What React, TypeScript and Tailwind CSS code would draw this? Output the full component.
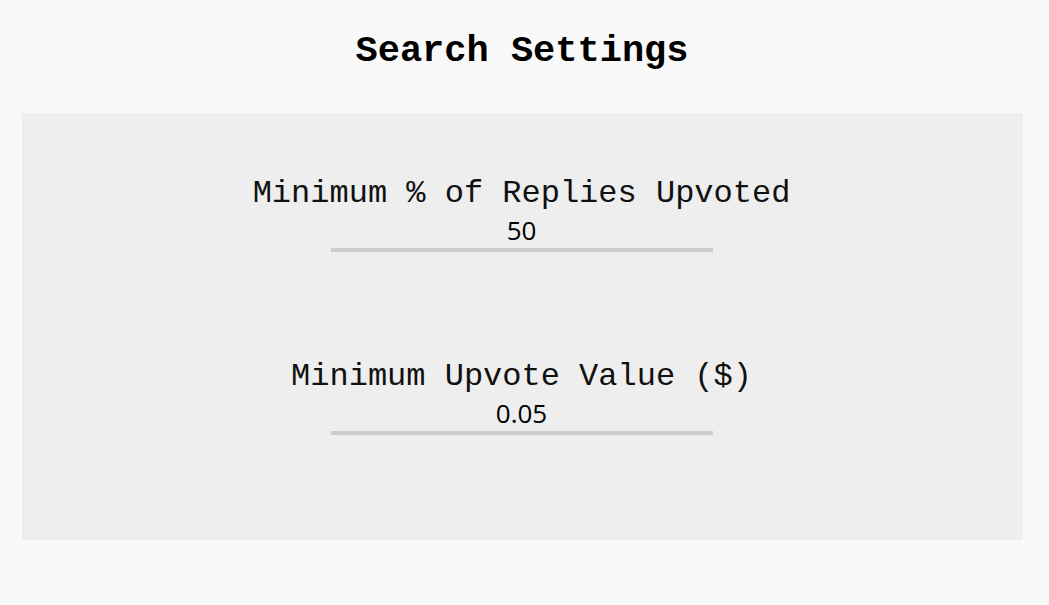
import React, { useState } from 'react';

const mono = { fontFamily: '"Liberation Mono", "Courier New", monospace' };

interface SettingFieldProps {
  label: string;
  value: string;
  onChange: (v: string) => void;
}

const SettingField: React.FC<SettingFieldProps> = ({ label, value, onChange }) => (
  <div className="flex flex-col items-center">
    <label className="text-[32px] leading-[36px] text-[#111]" style={mono}>
      {label}
    </label>
    <input
      type="text"
      value={value}
      onChange={(e) => onChange(e.target.value)}
      className="box-border h-[40px] w-[382px] border-0 border-b-4 border-[#cccccc] bg-transparent text-center text-[26px] font-medium text-black outline-none font-['Open_Sans',sans-serif]"
    />
  </div>
);

export default function App() {
  const [minPercent, setMinPercent] = useState('50');
  const [minValue, setMinValue] = useState('0.05');

  return (
    <div className="min-h-screen w-full bg-[#f9f9f9]">
      <h1
        className="pt-[30px] text-center text-[37px] font-bold leading-[42px] text-black pr-[5px]"
        style={mono}
      >
        Search Settings
      </h1>
      <div className="ml-[22px] mt-[41px] flex w-[1001px] flex-col items-center gap-[107px] bg-[#eeeeee] pt-[63px] pb-[105px] pr-[2px]">
        <SettingField label="Minimum % of Replies Upvoted" value={minPercent} onChange={setMinPercent} />
        <SettingField label="Minimum Upvote Value ($)" value={minValue} onChange={setMinValue} />
      </div>
    </div>
  );
}
